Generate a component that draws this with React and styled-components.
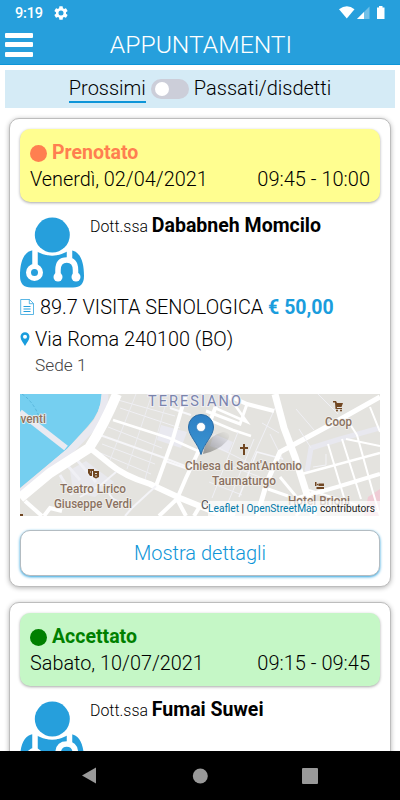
import styled, { createGlobalStyle } from "styled-components";

const GlobalStyle = createGlobalStyle`
  * {
    box-sizing: border-box;
  }
  body {
    margin: 0;
    background: #fff;
    color: #000;
    font-family: Roboto, "Liberation Sans", sans-serif;
    font-weight: 300;
  }
`;

const Screen = styled.div`
  width: 400px;
  height: 800px;
  display: flex;
  flex-direction: column;
  overflow: hidden;
`;

const StatusBar = styled.div`
  height: 25px;
  flex: none;
  display: flex;
  align-items: center;
  padding: 0 14px 0 15px;
  background: #269fdc;
  color: #fff;
  font-size: 14.5px;
  font-weight: 500;
  line-height: 25px;
`;

const Clock = styled.span`
  width: 39px;
  margin-top: 1px;
  letter-spacing: -0.2px;
`;

const StatusIcons = styled.div`
  display: flex;
  margin-left: auto;
`;

const Header = styled.header`
  height: 40px;
  flex: none;
  display: grid;
  grid-template-columns: 33px 1fr 33px;
  align-items: center;
  padding: 0 0 0 5px;
  background: #269fdc;
  border-bottom: 1px solid #0d95d8;
`;

const Burger = styled.button`
  width: 28px;
  height: 24px;
  padding: 0;
  border: none;
  background: transparent;
  display: flex;
  flex-direction: column;
  justify-content: space-between;
  span {
    width: 28px;
    height: 5px;
    border-radius: 1px;
    background: #fff;
  }
`;

const PageTitle = styled.h1`
  margin: 0 0 0 -3px;
  color: #fff;
  font-size: 24.7px;
  font-weight: 300;
  line-height: 38px;
  text-align: center;
`;

const Filter = styled.div`
  height: 38px;
  flex: none;
  margin: 5px 5px 0;
  display: flex;
  justify-content: center;
  background: #d5ebf6;
  font-size: 20px;
  line-height: 36px;
`;

const FilterLabel = styled.span`
  height: 33px;
  border-bottom: 2px solid ${(p) => (p.$active ? "#0d95d8" : "transparent")};
`;

const Toggle = styled.span`
  width: 38px;
  height: 20px;
  margin: 9px 5px 0;
  padding: 3px 4px;
  border-radius: 10px;
  background: #ccced9;
  &::before {
    content: "";
    display: block;
    width: 14px;
    height: 14px;
    border-radius: 50%;
    background: #fff;
  }
`;

const List = styled.main`
  flex: 1;
  min-height: 0;
  overflow: hidden;
  padding: 10px 9px 0;
`;

const Card = styled.article`
  margin-bottom: 15px;
  padding: 10px;
  border: 1px solid #bdbdbd;
  border-radius: 10px;
  background: #fff;
  box-shadow: 0 1px 5px rgba(0, 0, 0, 0.3);
`;

const Banner = styled.div`
  height: 73px;
  padding: 11px 10px 0;
  border-radius: 10px;
  background: ${(p) => p.$bg};
  box-shadow: 0 1px 3px rgba(0, 0, 0, 0.35);
  line-height: 26px;
`;

const Status = styled.div`
  display: flex;
  align-items: center;
  gap: 5px;
  color: ${(p) => p.$color};
  font-size: 19.5px;
  font-weight: 700;
  &::before {
    content: "";
    width: 17px;
    height: 17px;
    border-radius: 50%;
    background: currentColor;
  }
`;

const When = styled.div`
  display: flex;
  justify-content: space-between;
  font-size: 20px;
  line-height: 27px;
`;

const Day = styled.span`
  font-size: 19.85px;
`;

const Doctor = styled.div`
  height: 88px;
  display: flex;
  padding-top: 15px;
  svg {
    flex: none;
    margin-right: 5px;
  }
`;

const DoctorName = styled.p`
  margin: -3px 0 0;
  font-size: 15.9px;
  line-height: 24px;
  strong {
    font-size: 19.5px;
    font-weight: 700;
  }
`;

const Line = styled.div`
  height: ${(p) => p.$height}px;
  display: flex;
  align-items: center;
  font-size: 19.85px;
  line-height: 32px;
  white-space: pre;
  svg {
    flex: none;
  }
`;

const LineText = styled.span`
  padding-top: 1px;
`;

const Price = styled.strong`
  color: #1a9ddd;
  font-size: 19.5px;
  font-weight: 700;
`;

const Site = styled.div`
  height: 40px;
  padding-left: 15px;
  color: #444;
  font-size: 17.3px;
  line-height: 22px;
`;

const MapBox = styled.div`
  height: 122px;
  position: relative;
  overflow: hidden;
`;

const Attribution = styled.div`
  position: absolute;
  right: 0;
  bottom: 0;
  height: 15px;
  padding: 0 5px 0 0;
  background: rgba(255, 255, 255, 0.7);
  color: #222;
  font-size: 10.2px;
  font-weight: 400;
  line-height: 15px;
  white-space: nowrap;
  a {
    color: #0078a8;
    text-decoration: none;
  }
`;

const DetailsButton = styled.button`
  display: block;
  width: 100%;
  height: 46px;
  margin-top: 14px;
  padding: 1px 0 0;
  border: 1px solid #b3bcc2;
  border-radius: 10px;
  background: #fff;
  box-shadow: 0 1px 3px #269fdc;
  color: #0d95d8;
  font-family: inherit;
  font-size: 20px;
  font-weight: 300;
  line-height: 43px;
`;

const NavBar = styled.nav`
  height: 49px;
  flex: none;
  display: flex;
  justify-content: center;
  align-items: center;
  gap: 94px;
  background: #000;
`;

const GearIcon = () => (
  <svg width="14" height="14" viewBox="2 2 20 20" fill="#fff">
    <path d="M19.14 12.94c.04-.3.06-.61.06-.94s-.02-.64-.07-.94l2.03-1.58a.49.49 0 0 0 .12-.61l-1.92-3.32a.49.49 0 0 0-.59-.22l-2.39.96a7 7 0 0 0-1.62-.94l-.36-2.54a.48.48 0 0 0-.48-.41h-3.84a.47.47 0 0 0-.47.41l-.36 2.54c-.59.24-1.13.57-1.62.94l-2.39-.96a.48.48 0 0 0-.59.22L2.74 8.87a.47.47 0 0 0 .12.61l2.03 1.58c-.05.3-.09.63-.09.94s.02.64.07.94l-2.03 1.58a.49.49 0 0 0-.12.61l1.92 3.32c.12.22.37.29.59.22l2.39-.96c.5.38 1.03.7 1.62.94l.36 2.54c.05.24.24.41.48.41h3.84c.24 0 .44-.17.47-.41l.36-2.54a6.7 6.7 0 0 0 1.62-.94l2.39.96c.22.08.47 0 .59-.22l1.92-3.32a.47.47 0 0 0-.12-.61zM12 15.6A3.6 3.6 0 1 1 12 8.400a3.600 3.600 0 0 1 0 7.200z" />
  </svg>
);

const SignalIcons = () => (
  <svg width="48" height="15" viewBox="0 0 48 15">
    <path d="M1 4.300Q9 -2 16.500 4.300L8.800 13.500Z" fill="#fff" />
    <path d="M31.500 1.500V14H19Z" fill="#fff" opacity=".35" />
    <path d="M26 7V14H19Z" fill="#fff" />
    <path d="M41 1h3.500v1.500h2V14h-7.500V2.500h2Z" fill="#fff" />
  </svg>
);

const DoctorIcon = () => (
  <svg width="65" height="71" viewBox="0 0 65 71">
    <path
      d="M14 33C4 34 0 44 0 59Q0 70.500 11 70.500H53Q64 70.500 64 59C64 44 60 34 50 33Q32 44 14 33Z"
      fill="#269fdc"
    />
    <circle cx="32.300" cy="18" r="20.500" fill="#fff" />
    <circle cx="32.300" cy="18" r="17.500" fill="#269fdc" />
    <g fill="none" stroke="#fff">
      <path d="M15 32V50" strokeWidth="5.500" />
      <circle cx="14.500" cy="55.500" r="6" strokeWidth="5" />
      <path d="M49.500 32V44" strokeWidth="5.500" />
      <path
        d="M38 59V53Q38 43 46.800 43Q55.500 43 55.500 53V59"
        strokeWidth="5.500"
      />
    </g>
    <circle cx="38" cy="60" r="4.500" fill="#fff" />
    <circle cx="56" cy="60" r="4.500" fill="#fff" />
  </svg>
);

const DocumentIcon = () => (
  <svg width="20" height="16" viewBox="0 0 20 16">
    <g fill="none" stroke="#269fdc">
      <path d="M.7.500H9.500L13.500 4.500V15.500H.7Z" opacity=".75" />
      <path d="M9.300.500V4.700H13.500" opacity=".75" />
      <path d="M3.500 7.500H10.500M3.500 10H10.500M3.500 12.500H10.500" />
    </g>
  </svg>
);

const PlaceIcon = () => (
  <svg width="15" height="14" viewBox="0 0 15 14">
    <path
      d="M5 14C3.500 11 .5 8.200.5 4.800A4.500 4.600 0 0 1 9.500 4.800C9.500 8.200 6.500 11 5 14ZM5 2.800A2 2 0 1 0 5 6.800A2 2 0 1 0 5 2.800Z"
      fill="#1a9ddd"
    />
  </svg>
);

const streets = [
  // [path, width, colour]
  ["M85 0Q84 22 71 35L50 57L0 99", 7, "#e9e9f0"],
  ["M0 18L46 54", 6, "#eaeaf1"],
  ["M48 72L60 86M57 66L76 88M40 81L52 101", 3, "#f0f0f5"],
  ["M100 14L160 34M98 6L155 22M88 33L142 54M82 50L135 70M78 58L131 80", 1, "#f0f0f4"],
  ["M132 0L107 75M116 0L90 66M147 5L124 89", 1, "#ececf1"],
  ["M93 26L149 44L178 57", 2.500, "#fff"],
  ["M80 41L142 63L170 74", 2, "#f6f6f9"],
  ["M150 14L171 21M145 67L168 75", 2, "#f8f8fb"],
  ["M136 92L152 48L166 0", 4, "#fff"],
  ["M157 105L166 84L180 54L196 12", 4, "#fff"],
  ["M180 22L213 36L231 42M195 14L227 28L207 0", 2.500, "#fff"],
  ["M195 52L235 72M205 70L240 83M189 88L222 101M218 38L192 104M234 45L205 116", 1, "#f0f0f5"],
  ["M255 14L230 70M250 40L263 66M242 29L259 39", 1, "#f0f0f5"],
  ["M205 0L227 10L254 17", 4, "#fff"],
  ["M227 10L220 30L186 17", 3, "#fff"],
  ["M263 65L237 58L219 103", 1.500, "#f4f4f8"],
  ["M0 104L30 79L69 54Q84 31 97 0", 10, "#fff"],
  ["M70 54L90 70Q104 82 130 90L160 104L197 119L215 122", 6, "#fff"],
  ["M5 107L22 122M24 122L30 114L42 117", 4, "#fff"],
  ["M60 103L82 90L96 78M83 91L93 105L112 114M112 114L136 92M112 114L105 122", 2, "#f4f4f8"],
  ["M157 105L139 122M157 105L166 122M180 112L174 122", 4, "#fff"],
  ["M255 0L264 34L275 63L290 110L294 122", 7, "#fff"],
  ["M237 122L247 88L260 58L310 31L360 3", 5, "#fff"],
  ["M360 34L320 45L291 54L287 78", 5, "#e8e8ef"],
  ["M291 54L279 35M276 15L294 36M298 0L318 20", 1, "#f0f0f5"],
  ["M282 80L360 59", 2.500, "#fff"],
  ["M278 104L317 93L360 80", 4, "#fff"],
  ["M289 96L360 118", 2, "#fff"],
  ["M308 50L326 110M322 45L341 105M337 41L352 95L360 122M326 24L337 41M350 13L360 38M326 45L360 52", 2, "#fff"],
  ["M260 83L284 112L276 122M268 102L248 95", 3, "#fff"],
];

const places = [
  { x: 0.5, y: 29, width: 25.5, text: "venti" },
  { x: 40, y: 99, width: 66, text: "Teatro Lirico" },
  { x: 34, y: 114, width: 78, text: "Giuseppe Verdi" },
  { x: 165, y: 76, width: 117, text: "Chiesa di Sant'Antonio" },
  { x: 192, y: 91, width: 64, text: "Taumaturgo" },
  { x: 305, y: 32, width: 27, text: "Coop" },
  { x: 268, y: 111, width: 62, text: "Hotel Brioni" },
];

const StreetMap = () => (
  <svg width="360" height="122" viewBox="0 0 360 122">
    <defs>
      <linearGradient id="pin" x1="0" y1="0" x2="0" y2="1">
        <stop offset="0" stopColor="#2e7fc4" />
        <stop offset="1" stopColor="#3a95d2" />
      </linearGradient>
      <linearGradient id="pinShadow" x1="0" y1="1" x2="1" y2="0">
        <stop offset="0" stopColor="#000" stopOpacity=".35" />
        <stop offset="1" stopColor="#000" stopOpacity="0" />
      </linearGradient>
    </defs>
    <rect width="360" height="122" fill="#e4e3df" />
    <path d="M0 0H82Q81 18 68 32L47 55L0 94Z" fill="#75cff0" />
    <path d="M2 0Q14 8 20 25" stroke="#58b6dc" strokeDasharray="3 2" fill="none" />
    <path d="M141 31L167 38L161 54L137 46Z" fill="#e9e9f0" />
    <path d="M194 40L213 48L208 59L190 52Z" fill="#e9e9f0" />
    <path d="M50 76L66 67L94 88L75 103L53 98Z" fill="#e9e9ee" />
    <path d="M344 122L348 103L360 95V122Z" fill="#efccd5" />
    {streets.map(([d, width, color]) => (
      <path key={d} d={d} stroke={color} strokeWidth={width} fill="none" />
    ))}
    <path d="M306 60V71L293 73" stroke="#f2f2f6" fill="none" />
    <text
      x="128"
      y="12"
      textLength="93"
      fill="#7a84ac"
      stroke="#eeeef4"
      strokeWidth="2"
      paintOrder="stroke"
      fontSize="14.500"
      fontWeight="400"
    >
      TERESIANO
    </text>
    <g
      fill="#8a7161"
      stroke="#f3f1ee"
      strokeWidth="1.500"
      paintOrder="stroke"
      fontSize="12"
      fontWeight="500"
    >
      {places.map((p) => (
        <text
          key={p.text}
          x={p.x}
          y={p.y}
          textLength={p.width}
          lengthAdjust="spacingAndGlyphs"
        >
          {p.text}
        </text>
      ))}
      <text x="181" y="115" fontSize="12" fontWeight="400" fill="#555">
        C
      </text>
    </g>
    <g fill="#714722">
      <path d="M223 50H225V53H228V55H225V61H223V55H220V53H223Z" />
      <path d="M313 7H316L317 9H323L321.500 13H317V14H322V15H315.500L315 8.500H313Z" />
      <circle cx="317" cy="16.500" r="1" />
      <circle cx="321" cy="16.500" r="1" />
      <path d="M295 88H296.500V93H304V95H296.500V92H295ZM298.500 89.500H304V92H298.500Z" />
      <circle cx="297.700" cy="90.600" r=".8" />
      <path d="M68 75H74V77H72V82H70L68 79ZM73 77H79V83L76 84.500L73 83Z" />
      <path d="M0 120H3V122H0Z" />
    </g>
    <path d="M70 78H71M75 79.500H77M75 82H77" stroke="#e4e3df" />
    <path d="M183 60Q185 43 203 38Q213 39 207 47Q198 57 183 60Z" fill="url(#pinShadow)" />
    <path
      d="M181 60.500C178 49 168.500 42 168.500 33A12.500 12.500 0 0 1 193.500 33C193.500 42 184 49 181 60.500Z"
      fill="url(#pin)"
      stroke="#2a6ca6"
    />
    <circle cx="181" cy="33" r="4.500" fill="#fff" stroke="#2b70ae" strokeWidth=".5" />
  </svg>
);

const appointments = [
  {
    status: "Prenotato",
    color: "#ff7f50",
    bg: "#fffe90",
    date: "Venerdì, 02/04/2021",
    time: "09:45 - 10:00",
    doctor: "Dababneh Momcilo",
    full: true,
  },
  {
    status: "Accettato",
    color: "#008000",
    bg: "#c5f7c6",
    date: "Sabato, 10/07/2021",
    time: "09:15 - 09:45",
    doctor: "Fumai Suwei",
  },
];

const Details = () => {
  return (
    <>
      <Line $height={34}>
        <DocumentIcon />
        <LineText>
          89.7 VISITA SENOLOGICA <Price>€ 50,00</Price>
        </LineText>
      </Line>
      <Line $height={30}>
        <PlaceIcon />
        <LineText>Via Roma 240100 (BO)</LineText>
      </Line>
      <Site>Sede 1</Site>
      <MapBox>
        <StreetMap />
        <Attribution>
          <a href="#leaflet">Leaflet</a> | <a href="#osm">OpenStreetMap</a>{" "}
          contributors
        </Attribution>
      </MapBox>
      <DetailsButton>Mostra dettagli</DetailsButton>
    </>
  );
};

const Appointment = ({ data }) => {
  return (
    <Card>
      <Banner $bg={data.bg}>
        <Status $color={data.color}>{data.status}</Status>
        <When>
          <Day>{data.date}</Day>
          <span>{data.time}</span>
        </When>
      </Banner>
      <Doctor>
        <DoctorIcon />
        <DoctorName>
          Dott.ssa <strong>{data.doctor}</strong>
        </DoctorName>
      </Doctor>
      {data.full && <Details />}
    </Card>
  );
};

const App = () => {
  return (
    <Screen>
      <GlobalStyle />
      <StatusBar>
        <Clock>9:19</Clock>
        <GearIcon />
        <StatusIcons>
          <SignalIcons />
        </StatusIcons>
      </StatusBar>
      <Header>
        <Burger aria-label="Menu">
          <span />
          <span />
          <span />
        </Burger>
        <PageTitle>APPUNTAMENTI</PageTitle>
      </Header>
      <Filter>
        <FilterLabel $active>Prossimi</FilterLabel>
        <Toggle />
        <FilterLabel>Passati/disdetti</FilterLabel>
      </Filter>
      <List>
        {appointments.map((e) => (
          <Appointment key={e.date} data={e} />
        ))}
      </List>
      <NavBar>
        <svg width="16" height="17" viewBox="0 0 16 17">
          <path d="M14 .5V16.500L0 8.500Z" fill="#999" />
        </svg>
        <svg width="16" height="16" viewBox="0 0 16 16">
          <circle cx="8.300" cy="8" r="7.500" fill="#999" />
        </svg>
        <svg width="16" height="16" viewBox="0 0 16 16">
          <rect width="16" height="16" rx="1" fill="#999" />
        </svg>
      </NavBar>
    </Screen>
  );
};

export default App;
